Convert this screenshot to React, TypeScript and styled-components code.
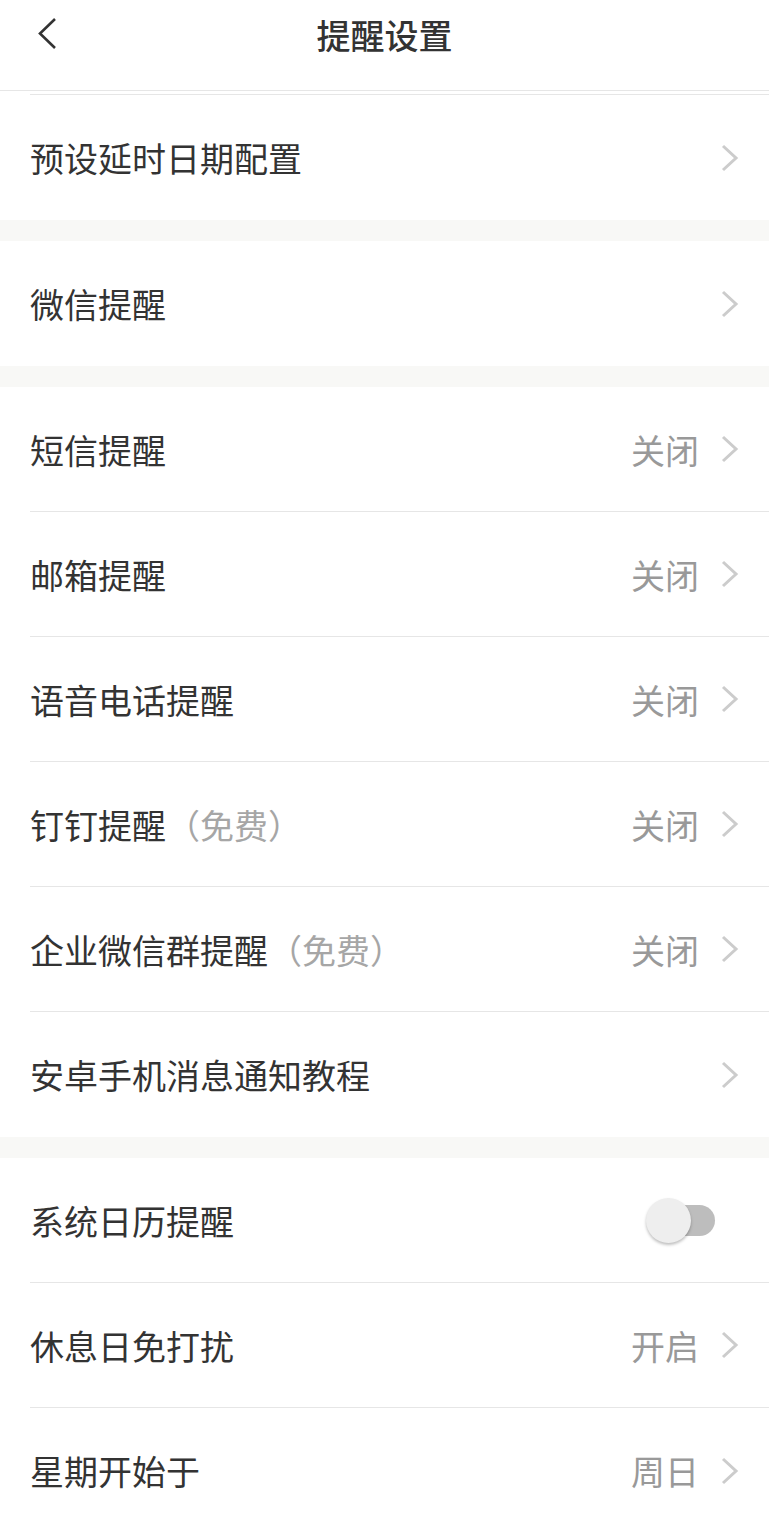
import styled, { createGlobalStyle } from "styled-components";

const GlobalStyle = createGlobalStyle`
    body {
        margin: 0;
        background: #ffffff;
        font-family: "Noto Sans CJK SC", "Noto Sans", sans-serif;
        color: #333333;
    }
    * {
        box-sizing: border-box;
    }
`;

type Item = {
    label: string;
    note?: string;
    value?: string;
    toggle?: boolean;
};

const groups: Item[][] = [
    [{ label: "预设延时日期配置" }],
    [{ label: "微信提醒" }],
    [
        { label: "短信提醒", value: "关闭" },
        { label: "邮箱提醒", value: "关闭" },
        { label: "语音电话提醒", value: "关闭" },
        { label: "钉钉提醒", note: "（免费）", value: "关闭" },
        { label: "企业微信群提醒", note: "（免费）", value: "关闭" },
        { label: "安卓手机消息通知教程" },
    ],
    [
        { label: "系统日历提醒", toggle: true },
        { label: "休息日免打扰", value: "开启" },
        { label: "星期开始于", value: "周日" },
    ],
];

const Page = styled.div`
    width: 769px;
    height: 1532px;
    overflow: hidden;
    background: #ffffff;
`;

const Header = styled.div`
    height: 91px;
    position: relative;
    display: flex;
    justify-content: center;
    border-bottom: 1px solid #e6e6e6;
`;

const Title = styled.div`
    line-height: 70px;
    font-size: 34px;
    font-weight: 500;
    color: #333333;
`;

const Back = styled.div`
    position: absolute;
    left: 36px;
    top: 16px;
    width: 22px;
    height: 36px;
`;

const ScrolledEdge = styled.div`
    height: 4px;
    margin-left: 30px;
    border-bottom: 1px solid #e6e6e6;
`;

const Gap = styled.div`
    height: 21px;
    background: #f8f8f6;
`;

const Group = styled.div`
    background: #ffffff;
`;

const Row = styled.div`
    padding-left: 30px;
`;

const RowInner = styled.div<{ $last: boolean }>`
    height: 125px;
    display: flex;
    align-items: center;
    padding-right: 30px;
    border-bottom: ${({ $last }) => ($last ? "none" : "1px solid #e6e6e6")};
`;

const Label = styled.div`
    flex: 1;
    font-size: 34px;
    color: #333333;
    white-space: nowrap;
`;

const Note = styled.span`
    color: #a6a6a6;
`;

const Value = styled.div`
    font-size: 34px;
    color: #999999;
    margin-right: 22px;
`;

const Chevron = styled.svg`
    width: 18px;
    height: 28px;
    display: block;
`;

const Track = styled.div`
    position: relative;
    width: 64px;
    height: 31px;
    margin-right: 24px;
    border-radius: 16px;
    background: #bdbdbd;
`;

const Knob = styled.div`
    position: absolute;
    left: -5px;
    top: -7px;
    width: 45px;
    height: 45px;
    border-radius: 50%;
    background: #eeeeee;
    box-shadow: 0 2px 3px rgba(0, 0, 0, 0.25);
`;

const Arrow = () => (
    <Chevron viewBox="0 0 18 28">
        <polyline
            points="2,2 15,14 2,26"
            fill="none"
            stroke="#cccccc"
            strokeWidth="3"
        />
    </Chevron>
);

export default function App() {
    return (
        <Page>
            <GlobalStyle />
            <Header>
                <Back>
                    <svg width="22" height="36" viewBox="0 0 22 36">
                        <polyline
                            points="19,3 4,17.5 19,32"
                            fill="none"
                            stroke="#333333"
                            strokeWidth="2.6"
                        />
                    </svg>
                </Back>
                <Title>提醒设置</Title>
            </Header>
            <ScrolledEdge />
            {groups.map((items, gi) => (
                <div key={gi}>
                    {gi > 0 && <Gap />}
                    <Group>
                        {items.map((item, i) => (
                            <Row key={item.label}>
                                <RowInner $last={i === items.length - 1}>
                                    <Label>
                                        {item.label}
                                        {item.note && <Note>{item.note}</Note>}
                                    </Label>
                                    {item.value && <Value>{item.value}</Value>}
                                    {item.toggle ? (
                                        <Track>
                                            <Knob />
                                        </Track>
                                    ) : (
                                        <Arrow />
                                    )}
                                </RowInner>
                            </Row>
                        ))}
                    </Group>
                </div>
            ))}
        </Page>
    );
}
